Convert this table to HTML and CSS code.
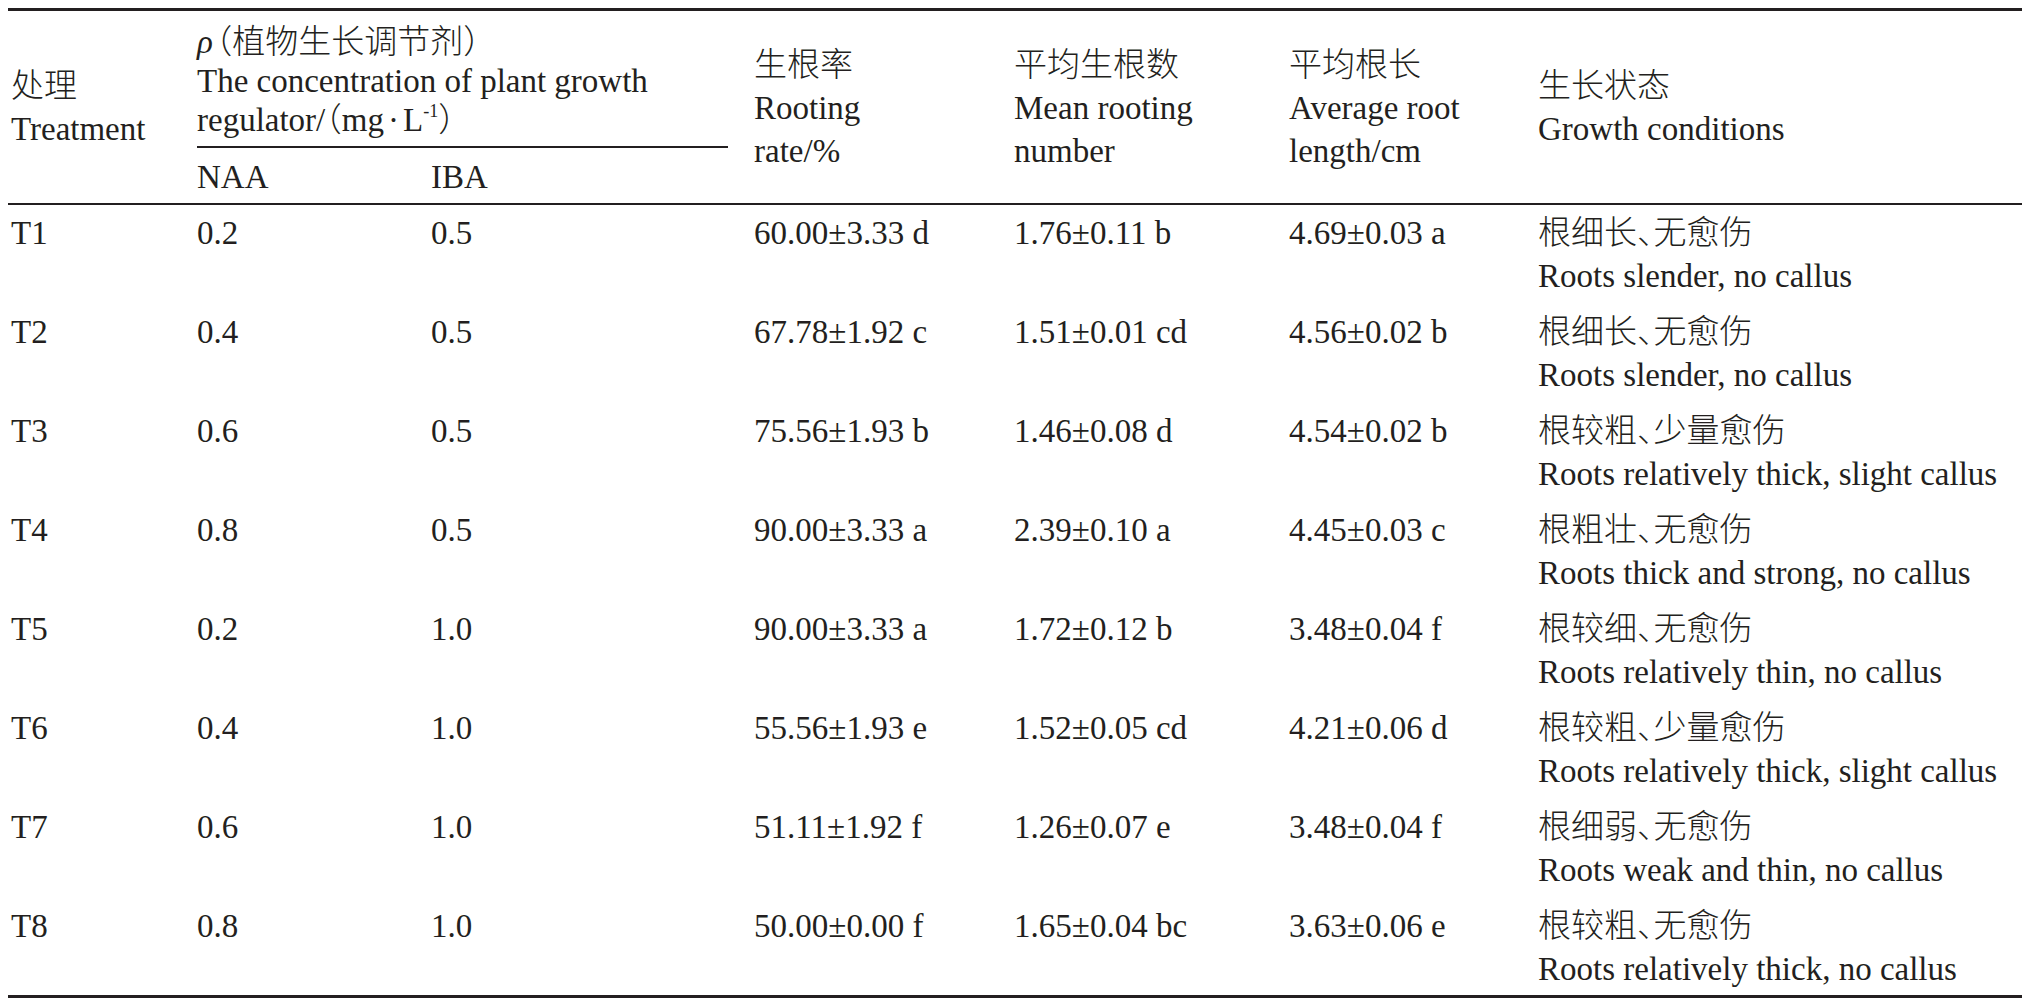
FILE: index.html
```html
<!DOCTYPE html>
<html lang="zh">
<head>
<meta charset="utf-8">
<title>植物生长调节剂对生根的影响</title>
<link rel="stylesheet" href="styles.css">
</head>
<body>
<table class="data">
  <colgroup>
    <col class="c1"><col class="c2"><col class="c3"><col class="c4"><col class="c5"><col class="c6"><col class="c7">
  </colgroup>
  <thead>
    <tr class="h1">
      <th rowspan="2" class="first span">处理<br>Treatment</th>
      <th colspan="2" class="conc"><i class="rho">ρ</i>（植物生长调节剂）<br>The concentration of plant growth<br>regulator/（mg<span class="dot">·</span>L<span class="sup">-1</span>）</th>
      <th rowspan="2" class="span">生根率<br>Rooting<br>rate/%</th>
      <th rowspan="2" class="span">平均生根数<br>Mean rooting<br>number</th>
      <th rowspan="2" class="span">平均根长<br>Average root<br>length/cm</th>
      <th rowspan="2" class="span">生长状态<br>Growth conditions</th>
    </tr>
    <tr class="h2">
      <th class="sub naa">NAA</th>
      <th class="sub iba">IBA</th>
    </tr>
  </thead>
  <tbody>
    <tr><td class="first">T1</td><td>0.2</td><td>0.5</td><td>60.00±3.33 d</td><td>1.76±0.11 b</td><td>4.69±0.03 a</td><td class="state">根细长、无愈伤<br>Roots slender, no callus</td></tr>
    <tr><td class="first">T2</td><td>0.4</td><td>0.5</td><td>67.78±1.92 c</td><td>1.51±0.01 cd</td><td>4.56±0.02 b</td><td class="state">根细长、无愈伤<br>Roots slender, no callus</td></tr>
    <tr><td class="first">T3</td><td>0.6</td><td>0.5</td><td>75.56±1.93 b</td><td>1.46±0.08 d</td><td>4.54±0.02 b</td><td class="state">根较粗、少量愈伤<br>Roots relatively thick, slight callus</td></tr>
    <tr><td class="first">T4</td><td>0.8</td><td>0.5</td><td>90.00±3.33 a</td><td>2.39±0.10 a</td><td>4.45±0.03 c</td><td class="state">根粗壮、无愈伤<br>Roots thick and strong, no callus</td></tr>
    <tr><td class="first">T5</td><td>0.2</td><td>1.0</td><td>90.00±3.33 a</td><td>1.72±0.12 b</td><td>3.48±0.04 f</td><td class="state">根较细、无愈伤<br>Roots relatively thin, no callus</td></tr>
    <tr><td class="first">T6</td><td>0.4</td><td>1.0</td><td>55.56±1.93 e</td><td>1.52±0.05 cd</td><td>4.21±0.06 d</td><td class="state">根较粗、少量愈伤<br>Roots relatively thick, slight callus</td></tr>
    <tr><td class="first">T7</td><td>0.6</td><td>1.0</td><td>51.11±1.92 f</td><td>1.26±0.07 e</td><td>3.48±0.04 f</td><td class="state">根细弱、无愈伤<br>Roots weak and thin, no callus</td></tr>
    <tr class="last"><td class="first">T8</td><td>0.8</td><td>1.0</td><td>50.00±0.00 f</td><td>1.65±0.04 bc</td><td>3.63±0.06 e</td><td class="state">根较粗、无愈伤<br>Roots relatively thick, no callus</td></tr>
  </tbody>
</table>
</body>
</html>
```
FILE: styles.css
```css
html, body {
  background: #ffffff;
}
body {
  margin: 8px;
  color: #231f20;
  font-family: "Liberation Serif", "Noto Sans CJK SC", serif;
  font-size: 33px;
  font-weight: 300;
}
.data {
  width: 2014px;
  table-layout: fixed;
  border-collapse: separate;
  border-spacing: 0;
  border-top: 3px solid #231f20;
  border-bottom: 3px solid #231f20;
}
.c1 { width: 189px; }
.c2 { width: 234px; }
.c3 { width: 323px; }
.c4 { width: 260px; }
.c5 { width: 275px; }
.c6 { width: 249px; }
.c7 { width: 484px; }

th, td {
  padding: 0;
  text-align: left;
  font-weight: 300;
  white-space: nowrap;
  line-height: 43px;
}
.first {
  padding-left: 3px;
}
.h1 { height: 135px; }
.h2 { height: 59px; }

.span {
  vertical-align: middle;
  border-bottom: 2px solid #231f20;
  padding-top: 2px;
}
.conc {
  vertical-align: middle;
  line-height: 39px;
  padding-top: 6px;
  font-feature-settings: "halt";
}
.rho {
  font-style: italic;
  margin-right: 3px;
}
.dot {
  margin: 0 4px;
}
.sup {
  font-size: 0.55em;
  line-height: 0;
  vertical-align: 0.75em;
}
.sub {
  vertical-align: middle;
  border-bottom: 2px solid #231f20;
  padding-top: 3px;
}
.naa {
  border-top: 2px solid #231f20;
}
.iba {
  border-top: 2px solid transparent;
  background: linear-gradient(#231f20, #231f20) no-repeat left top / calc(100% - 26px) 2px;
  background-origin: border-box;
}
tbody tr { height: 99px; }
tbody tr.last { height: 97px; }
tbody td {
  vertical-align: top;
  padding-top: 7px;
}
.state {
  font-feature-settings: "halt";
}
```
